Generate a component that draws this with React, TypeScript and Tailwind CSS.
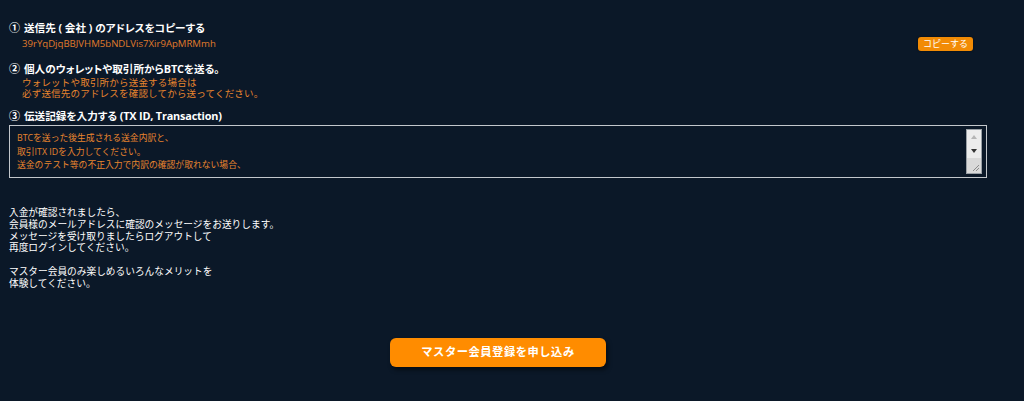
import React from "react";

const jp = "font-['Open_Sans','Noto_Sans_CJK_JP',sans-serif]";

// headings use proportional kana (palt) like the original page font
const StepTitle = ({ num, children }: { num: string; children: React.ReactNode }) => (
  <h3 className="flex items-center gap-[4px] text-[10.6px] leading-[14px] font-bold text-white [font-feature-settings:'palt']">
    <span className="text-[11px]">{num}</span>
    <span>{children}</span>
  </h3>
);

const Latin = ({ children }: { children: React.ReactNode }) => (
  <span className="text-[10.9px] tracking-[-0.2px]">{children}</span>
);

// fake textarea scrollbar (classic windows look)
const ScrollBar = () => (
  <div className="flex w-[16px] flex-col border border-[#9aa0a6] bg-[#ececec]">
    <div className="flex h-[14px] items-center justify-center">
      <span className="block h-0 w-0 border-x-[3px] border-b-[4px] border-x-transparent border-b-[#b5b5b5]" />
    </div>
    <div className="flex h-[14px] items-center justify-center">
      <span className="block h-0 w-0 border-x-[3px] border-t-[4px] border-x-transparent border-t-[#333]" />
    </div>
    <div className="flex flex-1 items-end justify-end bg-[#d9d9d9] p-[1px]">
      <svg width="9" height="9" viewBox="0 0 9 9">
        <path d="M8 2 L2 8 M8 5 L5 8" stroke="#8a8a8a" strokeWidth="1" />
      </svg>
    </div>
  </div>
);

export default function App() {
  return (
    <div className={`min-h-[401px] w-full bg-[#0b1828] pt-[21px] ${jp}`}>
      <div className="ml-[9px] w-[978px]">
        {/* step 1 */}
        <StepTitle num="①">送信先 ( 会社 ) のアドレスをコピーする</StepTitle>
        <div className="mt-[2px] flex items-center justify-between pr-[14px]">
          <span className="pl-[13px] text-[9.6px] leading-[14px] text-[#e07b2b]">
            39rYqDjqBBJVHM5bNDLVis7Xir9ApMRMmh
          </span>
          <button className="h-[14px] w-[55px] rounded-[3px] bg-[#f28b05] text-[9px] leading-[14px] text-white shadow-[0_0_2px_rgba(0,0,0,0.6)]">
            コピーする
          </button>
        </div>

        {/* step 2 */}
        <div className="mt-[11px]">
          <StepTitle num="②">
            個人のウォレットや取引所から<Latin>BTC</Latin>を送る。
          </StepTitle>
          <p className="mt-[1px] pl-[13px] text-[9.5px] leading-[11px] tracking-[0.2px] text-[#e8852e]">
            ウォレットや取引所から送金する場合は
            <br />
            必ず送信先のアドレスを確認してから送ってください。
          </p>
        </div>

        {/* step 3 */}
        <div className="mt-[10px]">
          <StepTitle num="③">
            伝送記録を入力する <Latin>(TX ID, Transaction)</Latin>
          </StepTitle>
          <div className="mt-[2px] flex h-[53px] border border-[#c3c7cc] p-[3px] pr-[4px]">
            <div className="flex-1 pl-[4px] pt-[3px] text-[8.8px] leading-[13.5px] text-[#e8852e]">
              BTCを送った後生成される送金内訳と、
              <br />
              取引ITX IDを入力してください。
              <br />
              送金のテスト等の不正入力で内訳の確認が取れない場合、
            </div>
            <ScrollBar />
          </div>
        </div>

        {/* notice */}
        <p className="mt-[29px] text-[9.7px] leading-[11.8px] text-white">
          入金が確認されましたら、
          <br />
          会員様のメールアドレスに確認のメッセージをお送りします。
          <br />
          メッセージを受け取りましたらログアウトして
          <br />
          再度ログインしてください。
          <br />
          <br />
          マスター会員のみ楽しめるいろんなメリットを
          <br />
          体験してください。
        </p>

        <div className="mt-[48px] flex justify-center">
          <button className="h-[29px] w-[216px] rounded-[6px] bg-[#ff8c00] text-[11.3px] font-bold tracking-[0.5px] text-white shadow-[2px_3px_4px_rgba(0,0,0,0.5)]">
            マスター会員登録を申し込み
          </button>
        </div>
      </div>
    </div>
  );
}
